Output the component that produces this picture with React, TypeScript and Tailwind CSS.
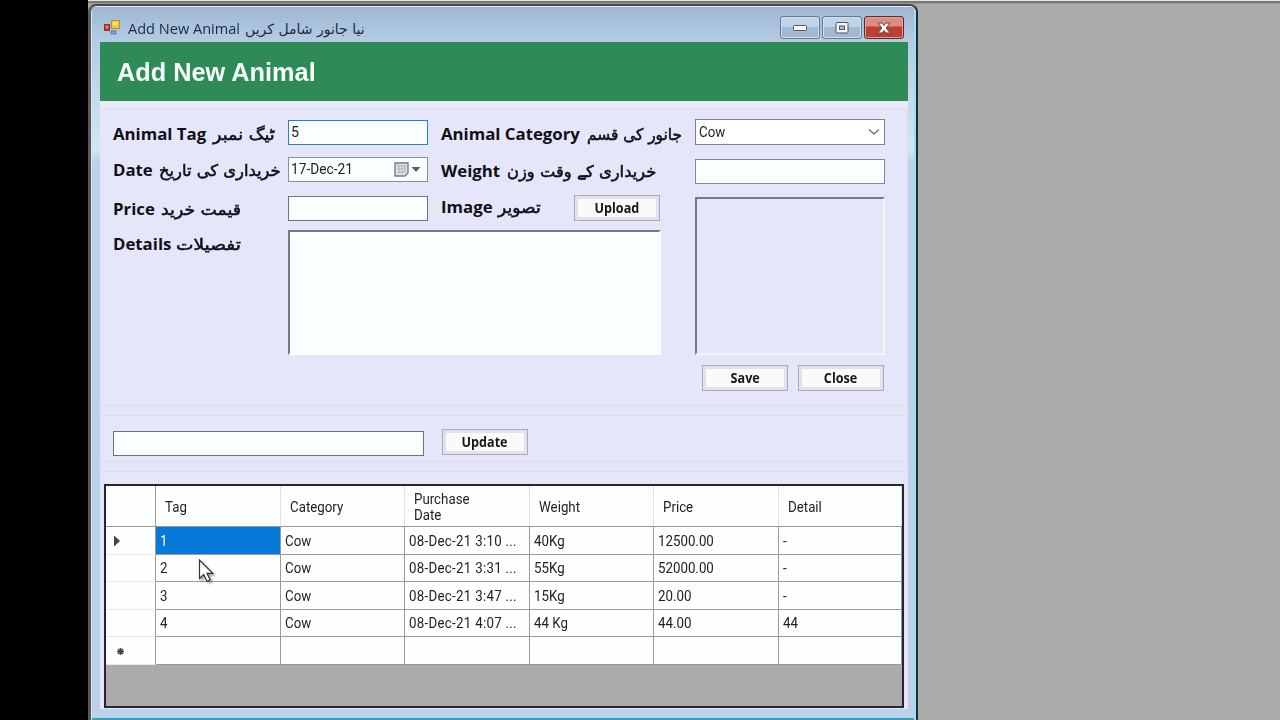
import { useState } from "react";
import clsx from "clsx";

const COLUMNS = ["Tag", "Category", "Purchase Date", "Weight", "Price", "Detail"];

const ANIMALS = [
  ["1", "Cow", "08-Dec-21 3:10 ...", "40Kg", "12500.00", "-"],
  ["2", "Cow", "08-Dec-21 3:31 ...", "55Kg", "52000.00", "-"],
  ["3", "Cow", "08-Dec-21 3:47 ...", "15Kg", "20.00", "-"],
  ["4", "Cow", "08-Dec-21 4:07 ...", "44 Kg", "44.00", "44"],
  ["", "", "", "", "", ""],
];

const GRID_COLS = "grid grid-cols-[50px_125px_124px_125px_124px_125px_123px]";

type LabelProps = {
  en: string;
  ur: string;
  enClass: string;
  urClass: string;
  className?: string;
};

function Label({ en, ur, enClass, urClass, className }: LabelProps) {
  return (
    <div className={clsx("flex h-6 shrink-0 items-baseline whitespace-nowrap text-[#101018]", className)}>
      <span className={clsx("shrink-0 font-['Open_Sans',sans-serif] text-[16.8px] leading-6 font-bold", enClass)}>{en}</span>
      <span
        dir="rtl"
        lang="ur"
        className={clsx(
          "shrink-0 origin-left font-['DejaVu_Sans',sans-serif] text-[16px] leading-6 [-webkit-text-stroke:0.55px]",
          urClass,
        )}
      >
        {ur}
      </span>
    </div>
  );
}

function Button({ children, className }: { children: string; className?: string }) {
  return (
    <button
      className={clsx(
        "h-[26px] w-[86px] shrink-0 border border-[#a9abb8] bg-[#fcf9fa] shadow-[inset_0_0_0_3px_#e1e2ea] font-['Open_Sans',sans-serif] text-[14px] leading-none font-bold text-[#15151a]",
        className,
      )}
    >
      <span className="inline-block scale-x-[0.9]">{children}</span>
    </button>
  );
}

function TextBox({ className, value = "" }: { className?: string; value?: string }) {
  const [text, setText] = useState(value);
  return (
    <input
      className={clsx("h-[25px] shrink-0 border bg-[#fbfeff] pb-px pl-[2px] text-[14px] text-[#222] outline-none", className)}
      value={text}
      onChange={(e) => setText(e.target.value)}
    />
  );
}

function AppIcon() {
  return (
    <svg width="17" height="17" viewBox="0 0 17 17" className="shrink-0">
      <rect x="0.5" y="5.5" width="5" height="6" fill="#c8453c" stroke="#8e2d2a" />
      <rect x="2" y="7" width="2" height="2" fill="#ef9a8c" />
      <rect x="7.5" y="1.5" width="8" height="8" fill="#f5c83d" stroke="#c08a22" />
      <rect x="9" y="3" width="4" height="3" fill="#fde68f" />
      <rect x="7" y="12" width="5" height="3" fill="#7ba3e2" stroke="#5680c8" />
    </svg>
  );
}

function TitleBar() {
  const glass =
    "flex h-[23px] w-10 items-center justify-center rounded-[3px] border border-[#64788f] bg-linear-to-b from-[#c0d3e7] from-45% to-[#a1b9d3] to-50% shadow-[inset_0_0_0_1px_#d3e0ee]";
  return (
    <div className="flex h-[35px] shrink-0 items-start bg-linear-to-b from-[#9db7d3] to-[#b6cce4] pl-[12px] pr-[10px]">
      <div className="flex h-[35px] items-center gap-[7px] pt-[6px]">
        <AppIcon />
        <div className="flex h-6 items-baseline whitespace-nowrap text-[#1d2b3b]">
          <span className="w-[117px] font-['Open_Sans',sans-serif] text-[15px] leading-6">
            <span className="inline-block origin-left scale-x-[0.97]">Add New Animal</span>
          </span>
          <span dir="rtl" lang="ur" className="font-['DejaVu_Sans',sans-serif] text-[14px] leading-6">
            نیا جانور شامل کریں
          </span>
        </div>
      </div>
      <div className="ml-auto flex gap-[2px] pt-[9px]">
        <button className={glass} aria-label="Minimize">
          <svg width="14" height="8" viewBox="0 0 14 8">
            <rect x="0.5" y="1.5" width="13" height="5" rx="1" fill="#f5f5f5" stroke="#4d5866" />
          </svg>
        </button>
        <button className={glass} aria-label="Maximize">
          <svg width="14" height="12" viewBox="0 0 14 12">
            <rect x="1" y="0.5" width="12" height="10.5" rx="1" fill="#f5f5f5" stroke="#4d5866" />
            <rect x="4.5" y="4" width="5" height="3.5" fill="#a9bdd3" stroke="#4d5866" />
          </svg>
        </button>
        <button
          className="flex h-[23px] w-10 items-center justify-center rounded-[3px] border border-[#5b2a30] bg-linear-to-b from-[#dc8d80] from-40% to-[#bc3f30] to-50% shadow-[inset_0_0_0_1px_#e2a397]"
          aria-label="Close window"
        >
          <svg width="14" height="12" viewBox="0 0 14 12">
            <path
              d="M1 1h4l2 2.5L9 1h4L9.2 6 13 11H9L7 8.5 5 11H1l3.8-5z"
              fill="#f7f7f7"
              stroke="#5a4a52"
              strokeWidth="1"
            />
          </svg>
        </button>
      </div>
    </div>
  );
}

function AnimalForm() {
  return (
    <div className="flex h-[298px] shrink-0 border-y border-r border-[#dcdcea] pl-[13px]">
      <div className="w-[582px] shrink-0">
        <div className="flex pt-[11px]">
          <Label className="mt-[2px] w-[175px]" en="Animal Tag" ur="ٹیگ نمبر" enClass="w-[100px]" urClass="scale-x-[1.1]" />
          <TextBox className="w-[140px] border-[#2a7fc4]" value="5" />
          <Label className="mt-[2px] ml-[13px]" en="Animal Category" ur="جانور کی قسم" enClass="w-[146px]" urClass="scale-x-[0.96]" />
        </div>
        <div className="flex pt-[11px]">
          <Label className="mt-[1px] w-[175px]" en="Date" ur="خریداری کی تاریخ" enClass="w-[46px]" urClass="scale-x-[1.02]" />
          <div className="flex h-[25px] w-[140px] shrink-0 items-center border border-[#8b8d97] bg-[#fbfeff] pl-[2px] text-[14px] text-[#222]">
            <span className="inline-block origin-left scale-x-[0.98]">17-Dec-21</span>
            <svg width="28" height="17" viewBox="0 0 28 17" className="ml-auto mr-[5px]">
              <path d="M1 2h13v10l-3 3H1z" fill="#e2e4e6" stroke="#777a7e" strokeWidth="1.4" />
              <path d="M3 5h9M3 8h9M3 11h9M5 4v9M8 4v9M11 4v7" stroke="#b1b4b8" />
              <path d="M17.5 6h9L22 11z" fill="#5b5e63" />
            </svg>
          </div>
          <Label className="mt-[2px] ml-[13px]" en="Weight" ur="خریداری کے وقت وزن" enClass="w-[66px]" urClass="scale-x-[1.02]" />
        </div>
        <div className="flex pt-3">
          <Label className="mt-[2px] w-[175px]" en="Price" ur="قیمت خرید" enClass="w-[48px]" urClass="scale-x-[1.08]" />
          <TextBox className="mt-[1px] w-[140px] border-[#6f717b]" />
          <Label className="ml-[13px] w-[133px]" en="Image" ur="تصویر" enClass="w-[57px]" urClass="scale-x-[1.07]" />
          <Button>Upload</Button>
        </div>
        <div className="flex pt-[9px]">
          <Label className="mt-[2px] w-[175px]" en="Details" ur="تفصیلات" enClass="w-[63px]" urClass="scale-x-[1.16]" />
          <textarea className="h-[125px] w-[373px] resize-none border-2 border-t-[#777983] border-r-white border-b-white border-l-[#777983] bg-[#fbfeff] outline-none" />
        </div>
      </div>
      <div className="w-[190px] pt-[10px]">
        <div className="flex h-[26px] items-center border border-[#7d8090] bg-white pr-[3px] pl-[3px] text-[14px] text-[#222]">
          <span className="inline-block origin-left scale-x-[0.95]">Cow</span>
          <svg width="14" height="8" viewBox="0 0 14 8" className="ml-auto">
            <path d="M2 1.5l5 4.5 5-4.5" fill="none" stroke="#666" strokeWidth="1.2" />
          </svg>
        </div>
        <TextBox className="mt-[14px] block w-full border-[#858796]" />
        <div className="mt-[13px] h-[158px] border-2 border-t-[#777983] border-r-[#f5f5fc] border-b-[#f5f5fc] border-l-[#777983]" />
        <div className="mt-[10px] flex gap-[10px] pl-[7px]">
          <Button>Save</Button>
          <Button>Close</Button>
        </div>
      </div>
    </div>
  );
}

function AnimalGrid() {
  return (
    <div className="ml-1 h-[224px] w-[800px] shrink-0 border-2 border-[#26262e] bg-[#ababab] text-[14px] text-[#222]">
      <div className={clsx(GRID_COLS, "h-[41px] border-b border-[#999] bg-[#fdfefe]")}>
        <div className="border-r border-[#999]" />
        {COLUMNS.map((column) => (
          <div key={column} className="flex items-center border-r border-[#e2e2e2] pt-px pr-8 pl-[9px] leading-4">
            <span className="inline-block origin-left scale-x-[0.95]">{column}</span>
          </div>
        ))}
      </div>
      {ANIMALS.map((row, i) => (
        <div key={i} className={clsx(GRID_COLS, "h-[27.5px] bg-[#fdfefe]")}>
          <div className="flex items-center border-r border-b border-r-[#999] border-b-[#e6e8e8] pt-[2px] pl-[7px]">
            {i === 0 && (
              <svg width="8" height="12" viewBox="0 0 8 12">
                <path d="M1 0.5v11L7 6z" fill="#444" />
              </svg>
            )}
            {i === 4 && (
              <svg width="14" height="9" viewBox="0 0 14 9">
                <path d="M7.5 1v7M4 4.5h7M5 2l5 5M10 2L5 7" stroke="#444" strokeWidth="1.5" />
              </svg>
            )}
          </div>
          {row.map((cell, j) => (
            <div
              key={j}
              className={clsx(
                "flex items-center overflow-hidden border-r border-b border-[#999] pt-[2px] pl-1 whitespace-nowrap",
                i === 0 && j === 0 && "bg-[#0678d7] text-white",
                j === 2 && "tracking-[0.3px]",
              )}
            >
              <span className="inline-block origin-left scale-x-[0.95]">{cell}</span>
            </div>
          ))}
        </div>
      ))}
    </div>
  );
}

export default function App() {
  return (
    <div className="relative flex h-[720px] w-[1280px] overflow-hidden bg-black font-['Roboto',sans-serif]">
      <div className="w-[88px] shrink-0" />
      <div className="flex-1 border-t border-[#e5e5e5] bg-[#ababab]">
        <div className="h-[3px] border-b border-[#999] bg-[#777]" />
        <div className="flex h-[716px] w-[830px] flex-col overflow-hidden rounded-t-lg border-t-2 border-r-2 border-l-[3px] border-t-[#45484c] border-r-[#14303c] border-l-[#58595b] bg-linear-to-b from-[#b6cce4] from-5% via-[#d3e6f3] via-20% to-[#bdd1e8] to-22%">
          <div className="flex h-full flex-col rounded-t-md border-t border-r-2 border-l border-t-[#e3edf6] border-r-[#a9d9ee] border-l-[#d9e8f3]">
            <TitleBar />
            <div className="mr-[6px] ml-2 flex h-[667px] shrink-0 flex-col bg-[#e6e6fa]">
              <div className="flex h-[59px] shrink-0 items-center bg-[#2e8b57] pt-[2px] pl-[17px] font-['Liberation_Sans',sans-serif] text-[25px] font-bold text-[#f6fff9]">
                <span className="inline-block origin-left scale-x-[1.012]">Add New Animal</span>
              </div>
              <div className="h-[7px] shrink-0 bg-[#e8ebf7]" />
              <AnimalForm />
              <div className="mt-[9px] flex h-[47px] shrink-0 gap-[18px] border-y border-r border-[#dcdcea] pl-[13px]">
                <TextBox className="mt-[15px] w-[311px] border-[#6f717b]" />
                <Button className="mt-[13px]">Update</Button>
              </div>
              <div className="mt-[9px] h-[13px] shrink-0 border-t border-[#dcdcea]" />
              <AnimalGrid />
            </div>
            <div className="mt-auto h-[2px] shrink-0 bg-[#32a3be]" />
          </div>
        </div>
      </div>
      {/* mouse pointer over the grid */}
      <svg
        width="20"
        height="28"
        viewBox="0 0 20 28"
        className="absolute top-[559px] left-[198px] drop-shadow-[2px_2px_1px_rgba(0,0,0,0.35)]"
      >
        <path d="M1.5 1v18.5l4.2-4 3.2 6.700 3.2-1.5-3.1-6.400h5.700z" fill="#fff" stroke="#333" strokeWidth="1.2" />
      </svg>
    </div>
  );
}
